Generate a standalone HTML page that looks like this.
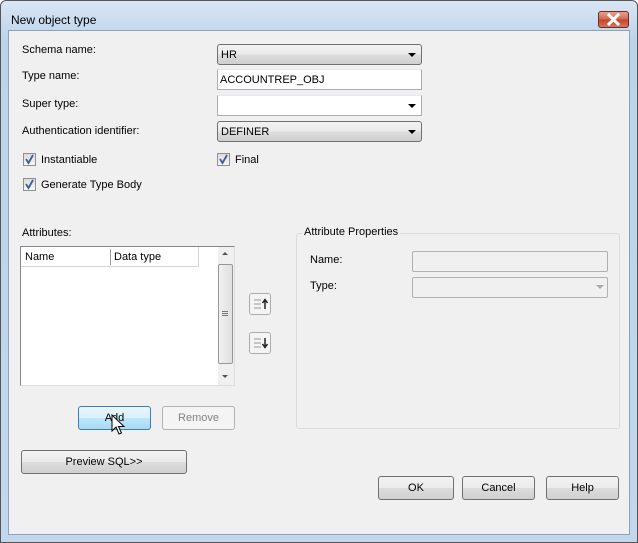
<!DOCTYPE html>
<html><head><meta charset="utf-8"><style>
*{box-sizing:border-box;margin:0;padding:0}
body{width:638px;height:543px;overflow:hidden;font-family:"Liberation Sans",sans-serif;font-size:11px;color:#000;background:#fff}
#win{position:absolute;left:0;top:0;width:638px;height:543px;background:linear-gradient(#d9e6f4,#bcd3ea 40px,#c2d7ec);border:1px solid #555;border-radius:6px 6px 0 0}
#content{position:absolute;left:8px;top:30px;width:622px;height:505px;background:#f0f0f0;border:1px solid #8aa4c0}
.a{position:absolute}
.lbl{position:absolute;white-space:nowrap;line-height:13px}
.combo{position:absolute;height:21px;border:1px solid #707070;border-radius:3px;background:linear-gradient(#f2f2f2,#ebebeb 50%,#dddddd 51%,#cfcfcf);padding:4px 0 0 3px}
.txt{position:absolute;height:21px;border:1px solid #abadb3;border-top-color:#e3e9ef;background:#fff;padding:4px 0 0 2px}
.arrow{position:absolute;right:5px;top:8px;width:0;height:0;border-left:4px solid transparent;border-right:4px solid transparent;border-top:4px solid #000}
.cb{position:absolute;width:13px;height:13px;border:1px solid #8f8f8f;background:linear-gradient(#dcdcdc,#f6f6f6)}
.btn{position:absolute;height:24px;border:1px solid #707070;border-radius:3px;background:linear-gradient(#f2f2f2,#ebebeb 50%,#dddddd 51%,#cfcfcf);text-align:center;line-height:22px;font-size:11px}
</style></head><body>
<div id="win">
<div class="lbl" style="left:10px;top:13px;font-size:12px;">New object type</div>
<div class="a" style="left:597px;top:10px;width:31px;height:17px;border:1px solid #6d2b22;border-radius:3px;background:linear-gradient(#e8a08e,#d0664f 50%,#c0432a 51%,#d5775a)">
<svg width="29" height="15" style="position:absolute;left:0;top:0"><path d="M10 3 L19 12 M19 3 L10 12" stroke="#fff" stroke-width="3" stroke-linecap="square"/></svg>
</div>
</div>
<div id="content"></div>

<div class="lbl" style="left:22px;top:44px">Schema name:</div>
<div class="lbl" style="left:22px;top:70px">Type name:</div>
<div class="lbl" style="left:22px;top:98px">Super type:</div>
<div class="lbl" style="left:22px;top:125px">Authentication identifier:</div>

<div class="combo" style="left:217px;top:44px;width:205px">HR<div class="arrow"></div></div>
<div class="txt" style="left:217px;top:69px;width:205px">ACCOUNTREP_OBJ</div>
<div class="txt" style="left:217px;top:95px;width:205px"><div class="arrow"></div></div>
<div class="combo" style="left:217px;top:121px;width:205px">DEFINER<div class="arrow"></div></div>

<div class="cb" style="left:23px;top:153px"><svg width="11" height="11" style="position:absolute;left:0;top:0"><path d="M2 5 L4.5 9 L9 1" stroke="#3a5d9a" stroke-width="1.8" fill="none"/></svg></div>
<div class="lbl" style="left:41px;top:154px">Instantiable</div>
<div class="cb" style="left:217px;top:153px"><svg width="11" height="11" style="position:absolute;left:0;top:0"><path d="M2 5 L4.5 9 L9 1" stroke="#3a5d9a" stroke-width="1.8" fill="none"/></svg></div>
<div class="lbl" style="left:235px;top:154px">Final</div>
<div class="cb" style="left:23px;top:178px"><svg width="11" height="11" style="position:absolute;left:0;top:0"><path d="M2 5 L4.5 9 L9 1" stroke="#3a5d9a" stroke-width="1.8" fill="none"/></svg></div>
<div class="lbl" style="left:41px;top:179px">Generate Type Body</div>

<div class="lbl" style="left:22px;top:227px">Attributes:</div>
<div class="a" style="left:20px;top:246px;width:215px;height:140px;background:#fff;border:1px solid #828790;border-right-color:#ddd;border-bottom-color:#ddd">
  <div class="a" style="left:0;top:0;width:178px;height:20px;border-bottom:1px solid #d5d5d5;border-right:1px solid #d5d5d5"></div>
  <div class="a" style="left:89px;top:2px;width:1px;height:16px;background:#999"></div>
  <div class="lbl" style="left:4px;top:4px">Name</div>
  <div class="lbl" style="left:93px;top:4px">Data type</div>
  <div class="a" style="left:197px;top:0;width:16px;height:138px;background:#f0f0f0">
    <div class="a" style="left:4px;top:5px;border-left:3px solid transparent;border-right:3px solid transparent;border-bottom:3px solid #555"></div>
    <div class="a" style="left:0;top:17px;width:15px;height:100px;border:1px solid #979797;border-radius:2px;background:linear-gradient(90deg,#f0f0f0,#e0e0e0)"></div>
    <div class="a" style="left:4px;top:64px;width:6px;height:5px;border-top:1px solid #777;border-bottom:1px solid #777"></div>
    <div class="a" style="left:4px;top:66px;width:6px;height:1px;background:#777"></div>
    <div class="a" style="left:4px;top:128px;border-left:3px solid transparent;border-right:3px solid transparent;border-top:3px solid #555"></div>
  </div>
</div>

<div class="a" style="left:249px;top:293px;width:22px;height:22px;border:1px solid #acacac;border-radius:3px;background:#f4f4f4">
<svg width="20" height="20"><path d="M4 6h7M4 10h7M4 14h7" stroke="#999" stroke-width="1"/><path d="M15 15V6M12.5 9L15 5.5 17.5 9" stroke="#222" stroke-width="1.5" fill="none"/></svg></div>
<div class="a" style="left:249px;top:332px;width:22px;height:22px;border:1px solid #acacac;border-radius:3px;background:#f4f4f4">
<svg width="20" height="20"><path d="M4 6h7M4 10h7M4 14h7" stroke="#999" stroke-width="1"/><path d="M15 5V14M12.5 11L15 14.5 17.5 11" stroke="#222" stroke-width="1.5" fill="none"/></svg></div>

<div class="btn" style="left:78px;top:406px;width:73px;border-color:#3c7fb1;background:linear-gradient(#eaf6fd,#d9f0fc 50%,#bee6fd 51%,#a7d9f5)">Add</div>
<svg class="a" style="left:111px;top:414px" width="16" height="26"><path d="M1 1 V17 L5 13 L8 20 L10.5 19 L7.5 12.5 L13 12.5 Z" fill="#fff" stroke="#000" stroke-width="1"/></svg>
<div class="btn" style="left:162px;top:406px;width:73px;border-color:#adb2b5;background:#f4f4f4;color:#838383">Remove</div>
<div class="btn" style="left:21px;top:450px;width:166px">Preview SQL&gt;&gt;</div>

<div class="a" style="left:296px;top:233px;width:324px;height:196px;border:1px solid #dcdcdc;border-radius:3px"></div>
<div class="lbl" style="left:302px;top:226px;background:#f0f0f0;padding:0 2px">Attribute Properties</div>
<div class="lbl" style="left:310px;top:254px">Name:</div>
<div class="lbl" style="left:310px;top:280px">Type:</div>
<div class="a" style="left:412px;top:251px;width:196px;height:21px;border:1px solid #adb2b5;border-radius:2px;background:#f0f0f0"></div>
<div class="a" style="left:412px;top:277px;width:196px;height:21px;border:1px solid #adb2b5;border-radius:2px;background:#f0f0f0">
  <div class="a" style="right:3px;top:7px;border-left:4px solid transparent;border-right:4px solid transparent;border-top:4px solid #aaa"></div>
</div>

<div class="btn" style="left:378px;top:476px;width:76px">OK</div>
<div class="btn" style="left:462px;top:476px;width:73px">Cancel</div>
<div class="btn" style="left:546px;top:476px;width:73px">Help</div>
</body></html>
